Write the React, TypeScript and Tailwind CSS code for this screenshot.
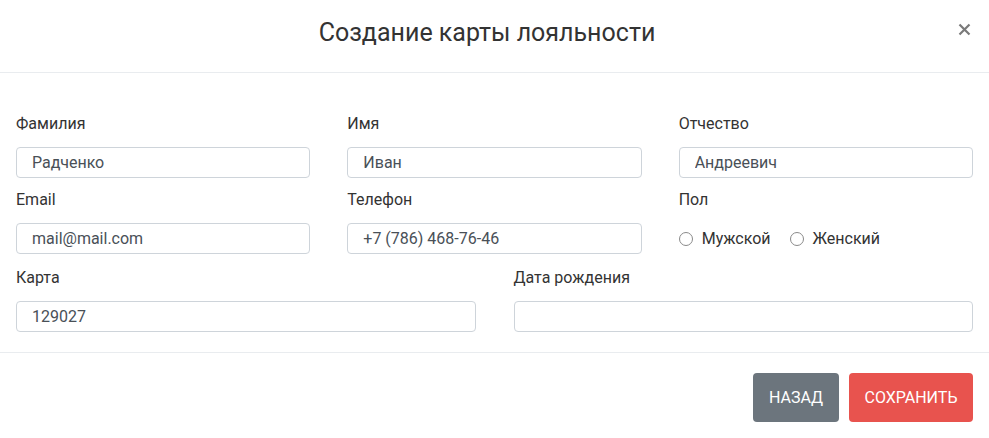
import React from 'react'

const Label = ({ children }: { children: React.ReactNode }) => (
  <div className="h-[21px] leading-[21px] mb-[13px] text-[16px] text-[#333]">{children}</div>
)

const Field = ({ label, value }: { label: string; value: string }) => (
  <div>
    <Label>{label}</Label>
    <input
      readOnly
      value={value}
      className="block w-full h-[31px] px-[15px] text-[16px] text-[#495057] border border-[#ced4da] rounded-[4px] outline-none bg-white"
    />
  </div>
)

const Radio = ({ label }: { label: string }) => (
  <label className="flex items-center gap-[9px] text-[16px] text-[#333]">
    <span className="w-[14px] h-[14px] rounded-full border border-[#8a8a8a] bg-white" />
    {label}
  </label>
)

export default function App() {
  return (
    <div className="w-[989px] h-[438px] bg-white font-['Roboto',sans-serif]">
      {/* Header */}
      <div className="relative h-[73px] border-b border-[#e9ecef] flex items-center justify-center pr-[15px]">
        <h1 className="text-[25px] text-[#333] pb-[7px]">Создание карты лояльности</h1>
        <button className="absolute right-[16px] top-[16px] w-[18px] h-[26px] flex items-center justify-center text-[#7a7a7a]">
          <svg width="13" height="13" viewBox="0 0 13 13">
            <path d="M1.5 1.5 L11.5 11.5 M11.5 1.5 L1.5 11.5" stroke="currentColor" strokeWidth="2.2" />
          </svg>
        </button>
      </div>

      {/* Body */}
      <div className="px-4 pt-[40px] pb-[20px] border-b border-[#e9ecef] flex flex-col">
        <div className="grid grid-cols-3 gap-x-[37px]">
          <Field label="Фамилия" value="Радченко" />
          <Field label="Имя" value="Иван" />
          <Field label="Отчество" value="Андреевич" />
        </div>
        <div className="grid grid-cols-3 gap-x-[37px] mt-[11px]">
          <Field label="Email" value="mail@mail.com" />
          <Field label="Телефон" value="+7 (786) 468-76-46" />
          <div>
            <Label>Пол</Label>
            <div className="h-[31px] flex items-center gap-[19px]">
              <Radio label="Мужской" />
              <Radio label="Женский" />
            </div>
          </div>
        </div>
        <div className="grid grid-cols-2 gap-x-[38px] mt-[13px]">
          <Field label="Карта" value="129027" />
          <Field label="Дата рождения" value="" />
        </div>
      </div>

      {/* Footer */}
      <div className="flex justify-end gap-[10px] px-4 pt-[20px]">
        <button className="h-[49px] w-[86px] rounded-[4px] bg-[#6c757d] text-white text-[16px] uppercase">Назад</button>
        <button className="h-[49px] w-[124px] rounded-[4px] bg-[#e8534e] text-white text-[16px] uppercase">Сохранить</button>
      </div>
    </div>
  )
}
